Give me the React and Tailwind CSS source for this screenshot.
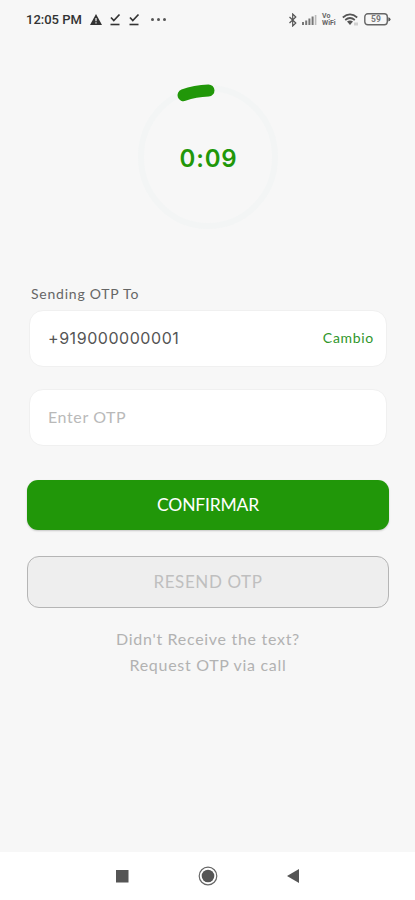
import { useState } from "react";

const BluetoothIcon = () => (
    <svg width="10" height="14" viewBox="0 0 10 14" fill="none">
        <path
            d="M1.5 4l6.3 6L4.7 13V1l3.1 3-6.3 6"
            stroke="#555"
            strokeWidth="1.2"
        />
    </svg>
);

const SignalIcon = () => (
    <svg width="16" height="12" viewBox="0 0 16 12" fill="#777">
        <rect x="0" y="8" width="2" height="3" />
        <rect x="3.2" y="6.5" width="2" height="4.5" />
        <rect x="6.4" y="4.5" width="2" height="6.5" />
        <rect x="9.6" y="2.5" width="2" height="8.5" />
        <rect x="12.8" y="1" width="1.6" height="10" fill="#bbb" />
    </svg>
);

const WifiIcon = () => (
    <svg width="17" height="13" viewBox="0 0 17 13" fill="none">
        <g stroke="#555" strokeWidth="1.7">
            <path d="M.8 4.5Q8 -1.7 15.2 4.5" />
            <path d="M3.2 7Q8 3 12.8 7" />
        </g>
        <path d="M5 8.6Q8 6.3 11 8.6L8 12z" fill="#555" />
        <path d="M13 9.5v3M15 9.5v3" stroke="#aaa" />
    </svg>
);

const BatteryIcon = () => (
    <svg width="27" height="13" viewBox="0 0 27 13">
        <rect
            x=".8"
            y=".8"
            width="22.5"
            height="11"
            rx="3"
            fill="none"
            stroke="#666"
            strokeWidth="1.4"
        />
        <path d="M24.3 4.2q2.2.3 2.2 2.1t-2.2 2.1z" fill="#555" />
        <text
            x="12"
            y="9.4"
            textAnchor="middle"
            fontSize="8.5"
            fontWeight="700"
            fontFamily="Roboto, sans-serif"
            fill="#777"
        >
            59
        </text>
    </svg>
);

const WarningIcon = () => (
    <svg width="12" height="11" viewBox="0 0 12 11">
        <path d="M6 0l6 11H0z" fill="#333" />
        <path d="M6 4v3.2M6 8.2v1.3" stroke="#f7f7f7" strokeWidth="1.2" />
    </svg>
);

const CheckIcon = () => (
    <svg width="12" height="13" viewBox="0 0 12 13" fill="none" stroke="#333">
        <path d="M2 4.5l2.8 3L10.5 1.5" strokeWidth="1.7" />
        <path d="M1.5 11.5h9" strokeWidth="1.6" />
    </svg>
);

const StatusBar = () => (
    <div className="flex h-[39px] items-center justify-between pl-[26px] pr-6 font-[Roboto,sans-serif] text-[#333]">
        <div className="flex items-center">
            <span className="w-[64px] whitespace-nowrap text-[13px] font-medium">
                12:05 PM
            </span>
            <WarningIcon />
            <span className="ml-[7px]">
                <CheckIcon />
            </span>
            <span className="ml-[7px]">
                <CheckIcon />
            </span>
            <span className="ml-[11px] flex gap-[3.5px]">
                <i className="size-[2.5px] rounded-full bg-[#555]" />
                <i className="size-[2.5px] rounded-full bg-[#555]" />
                <i className="size-[2.5px] rounded-full bg-[#555]" />
            </span>
        </div>
        <div className="flex items-center">
            <BluetoothIcon />
            <span className="ml-[4px]">
                <SignalIcon />
            </span>
            <span className="ml-[4px] w-[17px] text-[7px] font-bold leading-[7px] text-[#666]">
                Vo
                <br />
                WiFi
            </span>
            <span className="ml-[3px]">
                <WifiIcon />
            </span>
            <span className="ml-[5px]">
                <BatteryIcon />
            </span>
        </div>
    </div>
);

const Countdown = ({ time }) => (
    <div className="mx-auto mt-[43px] grid h-[150px] w-[144px] place-items-center">
        <svg
            className="col-start-1 row-start-1"
            width="144"
            height="150"
            viewBox="0 0 144 150"
            fill="none"
        >
            <ellipse cx="72" cy="75" rx="67" ry="69" stroke="#f3f5f5" strokeWidth="6" />
            <path
                d="M47.5 13.2Q59 9 72.5 8.5"
                stroke="#219709"
                strokeWidth="12"
                strokeLinecap="round"
            />
        </svg>
        <span className="col-start-1 row-start-1 pl-[2px] pt-[4px] font-[Inter,sans-serif] text-[24px] font-semibold leading-none tracking-[0.8px] text-[#219709]">
            {time}
        </span>
    </div>
);

const NavBar = () => (
    <div className="flex h-12 items-center bg-white pl-[116px]">
        <svg width="13" height="13">
            <rect width="12.5" height="12.5" fill="#555" />
        </svg>
        <svg className="ml-[69px]" width="20" height="20" viewBox="0 0 20 20">
            <circle cx="10" cy="10" r="8.8" fill="none" stroke="#666" strokeWidth="1.2" />
            <circle cx="10" cy="10" r="6.3" fill="#555" />
        </svg>
        <svg className="ml-[69px]" width="12" height="14" viewBox="0 0 12 14">
            <path d="M0 7L12 0v14z" fill="#555" />
        </svg>
    </div>
);

export default function App() {
    const [otp, setOtp] = useState("");

    return (
        <div className="flex h-[900px] w-[415px] flex-col overflow-hidden bg-[#f7f7f7] font-[Lato,sans-serif]">
            <StatusBar />
            <Countdown time="0:09" />

            <div className="mt-[52px] flex flex-1 flex-col px-[26px]">
                <p className="pl-[5px] text-[14px] leading-5 tracking-[0.77px] text-[#666]">
                    Sending OTP To
                </p>
                <div className="ml-[3px] mr-[2px] mt-[6px] flex h-[57px] items-center justify-between rounded-[14px] border border-[#f0f0f0] bg-white pb-[2px] pl-[18px] pr-[12px]">
                    <span className="font-[Inter,sans-serif] text-[16px] tracking-[0.55px] text-[#555]">
                        +919000000001
                    </span>
                    <button className="text-[14px] tracking-[0.7px] text-[#2f962a]">
                        Cambio
                    </button>
                </div>
                <input
                    className="ml-[3px] mr-[2px] mt-[22px] h-[57px] rounded-[14px] border border-[#f0f0f0] bg-white px-[18px] pb-[2px] text-[16px] tracking-[0.6px] text-[#555] outline-none placeholder:text-[#b9b9b9]"
                    placeholder="Enter OTP"
                    value={otp}
                    onChange={(e) => setOtp(e.target.value)}
                />

                <button className="ml-px mt-[34px] h-[50px] rounded-[11px] bg-[#219709] text-[17.5px] tracking-[-0.2px] text-white shadow-[0_1px_2px_rgba(0,0,0,0.2)]">
                    CONFIRMAR
                </button>
                <button className="ml-px mt-[26px] h-[52px] rounded-[12px] border border-[#b5b5b5] bg-[#eee] text-[17px] tracking-[0.6px] text-[#bfbfbf]">
                    RESEND OTP
                </button>

                <p className="mt-[18px] pl-px text-center text-[16px] leading-[26px] tracking-[0.7px] text-[#b2b2b2]">
                    Didn't Receive the text?
                    <br />
                    Request OTP via call
                </p>
            </div>

            <NavBar />
        </div>
    );
}
